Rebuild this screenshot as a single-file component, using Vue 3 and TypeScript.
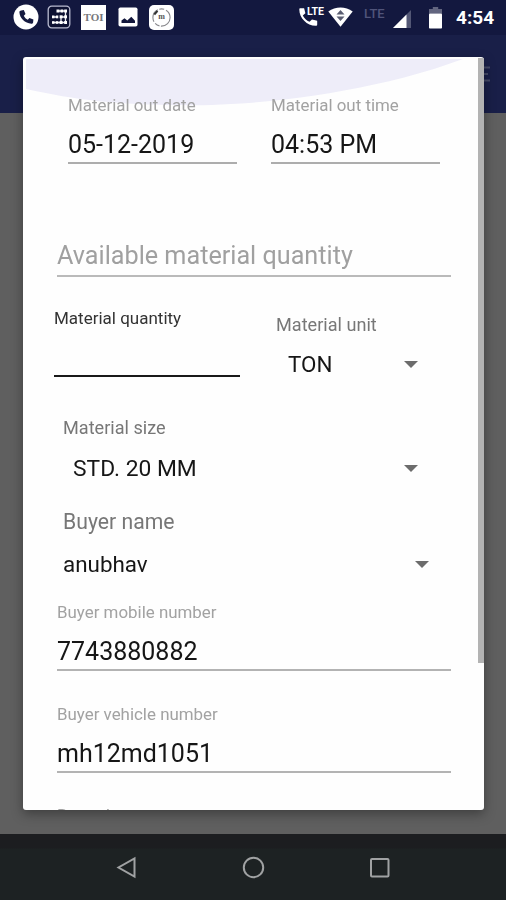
<script setup lang="ts">
import { ref } from 'vue'

interface TextField {
  id: string
  label: string
  value: string
}

const outDate = ref('05-12-2019')
const outTime = ref('04:53 PM')
const unit = ref('TON')
const size = ref('STD. 20 MM')
const buyer = ref('anubhav')
const buyerFields = ref<TextField[]>([
  { id: 'mobile', label: 'Buyer mobile number', value: '7743880882' },
  { id: 'vehicle', label: 'Buyer vehicle number', value: 'mh12md1051' },
])
</script>

<template>
  <div class="screen">
    <header class="status">
      <div class="notifications">
        <svg class="call" viewBox="0 0 26 26">
          <circle cx="13" cy="13" r="12.5" fill="#fff" />
          <path d="M8.2 6.500l2.600-.4 1.700 4-1.700 1.600c.9 1.900 2.200 3.200 4 4l1.600-1.700 4 1.600-.3 2.800c-.2.9-.8 1.300-1.700 1.300C12 19.500 6.600 14 6.400 8.300c0-1 .7-1.600 1.800-1.800z" fill="#151a40" />
        </svg>
        <svg class="grid" viewBox="0 0 24 24">
          <rect x="1.2" y="1.2" width="21.600" height="21.600" rx="3.500" fill="#0d1132" stroke="#b9bbd0" stroke-width="1.300" />
          <path d="M11 6h8M6 12h4M14 12h4.500M6 17.500h12.500M14 12v5.500M18.500 6v11.500" fill="none" stroke="#e6e7f0" stroke-width="1.300" />
          <g fill="#fff">
            <rect x="9.500" y="4.500" width="3" height="3" /><rect x="13.500" y="4.500" width="2.800" height="3" /><rect x="17.200" y="4.500" width="2.800" height="3" />
            <rect x="5" y="10.500" width="2.500" height="2.800" /><rect x="8.800" y="10.500" width="2.500" height="2.800" /><rect x="12.600" y="10.300" width="3" height="3" /><rect x="17.200" y="10.300" width="2.800" height="3" />
            <rect x="5" y="16.200" width="2.500" height="2.600" /><rect x="8.800" y="16.200" width="2.500" height="2.600" /><rect x="12.600" y="16" width="3" height="3" /><rect x="17.200" y="16" width="2.800" height="3" />
          </g>
        </svg>
        <span class="toi">TOI</span>
        <svg class="photo" viewBox="0 0 20 20">
          <rect x=".5" y=".5" width="19" height="19" rx="1.800" fill="#fff" />
          <path d="M3.500 16v-2.500l3-2.300 2.800 2.300 4-3.700 3.700 4V16z" fill="#12163b" />
        </svg>
        <span class="badge">
          <svg viewBox="0 0 25 25">
            <circle cx="12.500" cy="12.500" r="8.600" fill="none" stroke="#88888c" stroke-width="1.100" stroke-dasharray="14 1.500 5 2" />
            <path d="M5.300 9.500l3.200-3.700" stroke="#333" stroke-width="2" />
          </svg>
          <b>m</b>
        </span>
      </div>
      <div class="system">
        <span class="volte">
          <svg viewBox="0 0 20 20">
            <path d="M1.300 1.200h3.800l1.300 5-2.600 2.300c1.500 3 3.700 5.200 6.700 6.300l2.500-2.300 5.200 1.300v3.600c0 1-.5 1.400-1.500 1.400C8 18.800.3 11 .3 2.500c0-.8.3-1.300 1-1.300z" fill="#fff" />
          </svg>
          <em>LTE</em>
        </span>
        <svg class="wifi" viewBox="0 0 25 20">
          <path d="M.3 4.500C7.500-1 17.500-1 24.700 4.500L12.500 19.700z" fill="#fff" />
          <path d="M8.500 7.500l4-4.500 4 4.500zM8.500 9.500h8l-4 4.500z" fill="#5b5e72" />
        </svg>
        <span class="lte">LTE</span>
        <svg class="signal" viewBox="0 0 18 18">
          <path d="M0 18L18 0v18z" fill="#535775" />
          <path d="M0 18L13.500 4.500V18z" fill="#fff" />
        </svg>
        <svg class="battery" viewBox="0 0 13 22">
          <path d="M3.800 0h5.400v2H13v4.500H0V2h3.800z" fill="#62657f" />
          <rect y="6.500" width="13" height="15" rx=".8" fill="#fff" />
        </svg>
        <span class="clock">4:54</span>
      </div>
    </header>

    <div class="appbar">
      <svg viewBox="0 0 10 16"><path d="M0 1.500h9M0 8h7M0 14.500h9" stroke="#444967" stroke-width="2" /></svg>
    </div>

    <main class="stage">
      <section class="dialog">
        <svg class="wave" viewBox="0 0 461 50" preserveAspectRatio="none">
          <path d="M3 2H440C338 40 212 50 158 48 95 48 53 43 3 32z" fill="#eeedf9" />
        </svg>
        <form class="form" @submit.prevent>
          <div class="row dates">
            <label class="field out">
              <span class="caption">Material out date</span>
              <span class="value">{{ outDate }}</span>
            </label>
            <label class="field out">
              <span class="caption">Material out time</span>
              <span class="value">{{ outTime }}</span>
            </label>
          </div>

          <div class="available">Available material quantity</div>

          <div class="row amounts">
            <div class="quantity">Material quantity</div>
            <div class="unit">
              <span class="caption dark">Material unit</span>
              <div class="select">
                <span>{{ unit }}</span>
                <svg class="arrow" viewBox="0 0 14 7"><path d="M0 0h14L7 7z" /></svg>
              </div>
            </div>
          </div>

          <div class="size">
            <span class="caption dark">Material size</span>
            <div class="select">
              <span>{{ size }}</span>
              <svg class="arrow" viewBox="0 0 14 7"><path d="M0 0h14L7 7z" /></svg>
            </div>
          </div>

          <div class="buyer">
            <span class="title">Buyer name</span>
            <div class="select">
              <span>{{ buyer }}</span>
              <svg class="arrow" viewBox="0 0 14 7"><path d="M0 0h14L7 7z" /></svg>
            </div>
          </div>

          <label v-for="f in buyerFields" :key="f.id" class="field detail">
            <span class="caption">{{ f.label }}</span>
            <span class="value">{{ f.value }}</span>
          </label>
          <span class="caption remark">Remark</span>
        </form>
        <div class="scrollbar"></div>
      </section>
    </main>

    <nav class="nav">
      <svg viewBox="0 0 24 24"><path d="M19.500 3.500v18L3.500 12.500z" /></svg>
      <svg viewBox="0 0 24 24"><circle cx="12.500" cy="12.500" r="9.700" /></svg>
      <svg viewBox="0 0 24 24"><rect x="4" y="4" width="17.500" height="17.500" rx="1" /></svg>
    </nav>
  </div>
</template>

<style>
body {
  margin: 0;
}
</style>

<style scoped>
.screen {
  width: 506px;
  height: 900px;
  display: flex;
  flex-direction: column;
  overflow: hidden;
  background: #5f5f5f;
  font-family: Roboto, "Liberation Sans", sans-serif;
  color: #161616;
}
.screen * {
  box-sizing: border-box;
}
.status {
  height: 35px;
  flex: none;
  display: flex;
  justify-content: space-between;
  padding: 0 11px 0 13px;
  background: #13183f;
}
.notifications,
.system {
  display: flex;
  align-items: center;
  height: 34px;
}
.call {
  width: 26px;
  height: 26px;
}
.grid {
  width: 24px;
  height: 24px;
  margin-left: 8px;
}
.toi {
  width: 25px;
  height: 25px;
  margin-left: 10px;
  background: #fff;
  color: #77777b;
  font: 700 11px/25px "Liberation Serif", serif;
  text-align: center;
}
.photo {
  width: 20px;
  height: 20px;
  margin-left: 12px;
}
.badge {
  position: relative;
  width: 25px;
  height: 25px;
  margin-left: 11px;
  border-radius: 5px;
  background: #fff;
}
.badge svg {
  display: block;
}
.badge b {
  position: absolute;
  inset: 0;
  font: 700 8px/23px "Liberation Serif", serif;
  color: #555;
  text-align: center;
}
.volte {
  position: relative;
  width: 27px;
  height: 20px;
}
.volte svg {
  display: block;
  width: 20px;
  height: 20px;
}
.volte em {
  position: absolute;
  left: 8px;
  top: 0;
  font: 700 10.500px/10px Roboto, sans-serif;
  color: #fff;
}
.wifi {
  width: 25px;
  height: 20px;
  margin-left: 2px;
}
.lte {
  width: 23px;
  margin-left: 11px;
  padding-bottom: 7px;
  font: 500 13px/14px Roboto, sans-serif;
  color: #50547a;
}
.signal {
  width: 18px;
  height: 18px;
  margin: 3px 0 0 6px;
}
.battery {
  width: 13px;
  height: 22px;
  margin: 2px 0 0 18px;
}
.clock {
  width: 39px;
  margin-left: 14px;
  padding-top: 2px;
  font-size: 19px;
  font-weight: 700;
  line-height: 34px;
  color: #fff;
  white-space: nowrap;
}
.appbar {
  height: 78px;
  flex: none;
  display: flex;
  justify-content: flex-end;
  padding: 31px 15px 0 0;
  background: #191f48;
}
.appbar svg {
  width: 10px;
  height: 16px;
}
.stage {
  position: relative;
  height: 777px;
  flex: none;
  margin-top: -56px;
  padding: 0 22px 0 23px;
  filter: drop-shadow(0 4px 6px rgba(0, 0, 0, 0.35));
}
.dialog {
  position: relative;
  width: 461px;
  height: 753px;
  border-radius: 3px;
  background: #fefefe;
  overflow: hidden;
}
.wave {
  position: absolute;
  left: 0;
  top: 0;
  width: 461px;
  height: 50px;
}
.form {
  position: relative;
  display: flex;
  flex-direction: column;
  padding-top: 38px;
}
.row {
  display: flex;
}
.caption {
  display: block;
  font-size: 16.900px;
  line-height: 20px;
  color: #a2a2a2;
  white-space: nowrap;
}
.caption.dark {
  font-size: 18.100px;
  color: #777;
}
.field {
  display: flex;
  flex-direction: column;
}
.value {
  display: block;
  font-size: 25px;
  line-height: 30px;
  white-space: nowrap;
}
.dates {
  gap: 34px;
  padding-left: 45px;
}
.out {
  width: 169px;
  height: 69px;
  gap: 15px;
  border-bottom: 2px solid #adadad;
}
.available {
  width: 394px;
  height: 38px;
  margin: 75px 0 0 34px;
  border-bottom: 2px solid #bababa;
  font-size: 25.200px;
  line-height: 33px;
  color: #a0a0a0;
  white-space: nowrap;
}
.amounts {
  height: 116px;
  padding: 31px 0 0 31px;
}
.quantity {
  width: 186px;
  height: 69px;
  border-bottom: 2px solid #191919;
  font-size: 17px;
  line-height: 20px;
  color: #333;
}
.unit {
  margin-left: 36px;
  padding-top: 7px;
}
.select {
  display: flex;
  align-items: center;
  justify-content: space-between;
  height: 30px;
  font-size: 22.400px;
  white-space: nowrap;
}
.unit .select {
  width: 142px;
  margin-top: 14px;
  padding-left: 12px;
}
.arrow {
  width: 14px;
  height: 7px;
  fill: #6c6c6c;
}
.size {
  width: 355px;
  margin: 25px 0 0 40px;
}
.size .select {
  margin-top: 15px;
  padding-left: 10px;
  font-size: 22.800px;
}
.buyer {
  width: 366px;
  margin: 24px 0 0 40px;
}
.title {
  display: block;
  font-size: 21.200px;
  line-height: 30px;
  color: #777;
}
.buyer .select {
  margin-top: 12px;
}
.detail {
  width: 394px;
  height: 69px;
  margin: 23px 0 0 34px;
  gap: 15px;
  border-bottom: 2px solid #b3b3b3;
}
.detail + .detail {
  margin-top: 33px;
}
.remark {
  margin: 32px 0 0 34px;
}
.scrollbar {
  position: absolute;
  top: 1px;
  right: 0;
  width: 6px;
  height: 605px;
  background: #b3b3b3;
}
.nav {
  position: relative;
  height: 66px;
  flex: none;
  display: flex;
  justify-content: center;
  gap: 102px;
  padding-top: 21px;
  background: linear-gradient(#1c1d20 0 14px, #1d2223 15px);
}
.nav svg {
  width: 24px;
  height: 24px;
  fill: none;
  stroke: #a0a2a3;
  stroke-width: 2;
}
</style>
